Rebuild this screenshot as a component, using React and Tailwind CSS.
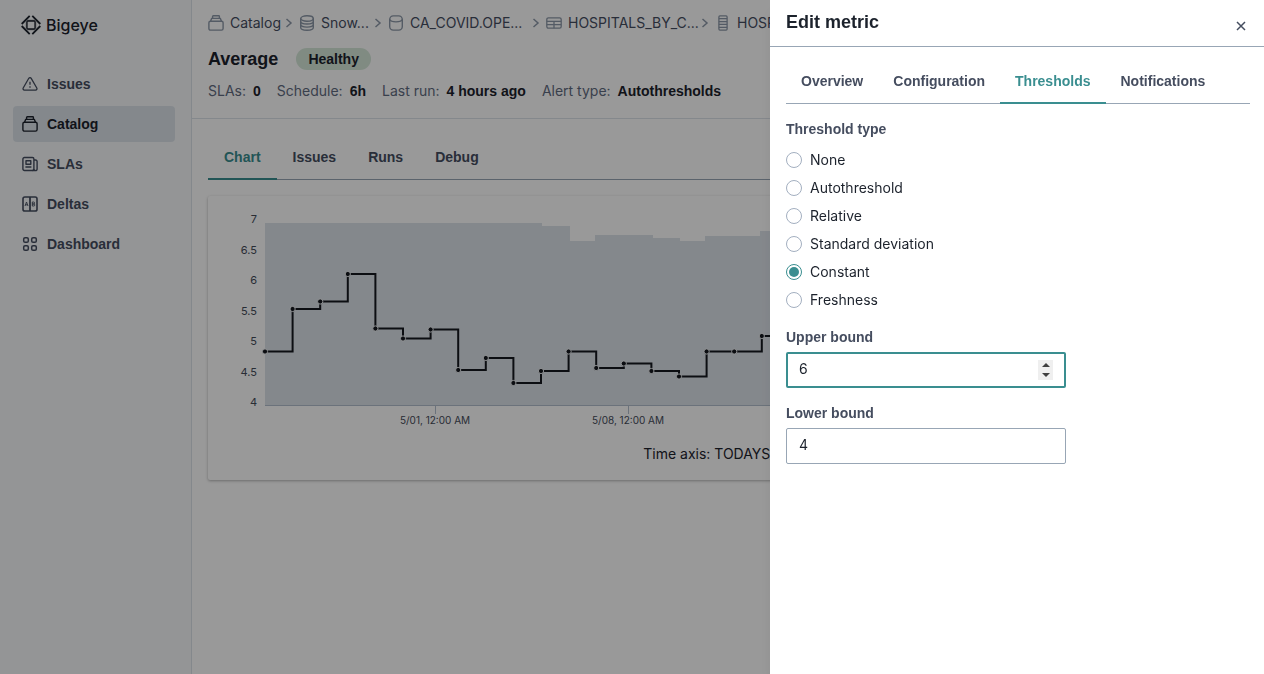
import React, { useRef, useState } from "react";

const CatalogIcon = ({ className }) => (
  <svg className={className} viewBox="0 0 16 16" fill="none" stroke="currentColor" strokeWidth="1.4" strokeLinejoin="round">
    <rect x="0.9" y="6.2" width="14.2" height="8.9" rx="1.6" />
    <path d="M2.6 6.2 3.6 3.4h8.8l1 2.8" />
    <path d="M4.6 3.4V1.5a.7.7 0 0 1 .7-.7h5.4a.7.7 0 0 1 .7.7v1.9" />
  </svg>
);

const DatabaseIcon = ({ className }) => (
  <svg className={className} viewBox="0 0 16 16" fill="none" stroke="currentColor" strokeWidth="1.4">
    <ellipse cx="8" cy="3.5" rx="6.3" ry="2.7" />
    <path d="M1.7 3.3v9.2c0 1.5 2.8 2.7 6.3 2.7s6.3-1.2 6.3-2.7V3.3" />
    <path d="M1.7 6.5C1.7 7.9 4.5 9 8 9s6.3-1.1 6.3-2.5M1.7 9.6c0 1.4 2.8 2.5 6.3 2.5s6.3-1.1 6.3-2.5" />
  </svg>
);

const SchemaIcon = ({ className }) => (
  <svg className={className} viewBox="0 0 16 16" fill="none" stroke="currentColor" strokeWidth="1.4">
    <rect x="1.7" y="0.9" width="12.6" height="14.2" rx="3.6" />
    <path d="M1.7 4.6C2.2 6 4.8 6.9 8 6.9s5.8-.9 6.3-2.3" />
  </svg>
);

const TableIcon = ({ className }) => (
  <svg className={className} viewBox="0 0 16 16" fill="none" stroke="currentColor" strokeWidth="1.3">
    <rect x="0.8" y="2.8" width="14.4" height="10.4" rx="1.6" />
    <path d="M.8 6.3h14.4M.8 9.7h14.4M8 6.3v6.9" />
  </svg>
);

const ColumnIcon = ({ className }) => (
  <svg className={className} viewBox="0 0 10 16" fill="none" stroke="currentColor" strokeWidth="1.3">
    <rect x="0.9" y="0.9" width="8.2" height="14.2" rx="1" />
    <path d="M.9 3.7h8.2M.9 6.6h8.2M.9 9.4h8.2M.9 12.3h8.2" />
  </svg>
);

const ChevronIcon = ({ className }) => (
  <svg className={className} viewBox="0 0 8 10" fill="none" stroke="currentColor" strokeWidth="1.5">
    <path d="M1.5 1 6 5 1.5 9" />
  </svg>
);

const IssuesIcon = ({ className }) => (
  <svg className={className} viewBox="0 0 16 16" fill="none" stroke="currentColor" strokeWidth="1.3" strokeLinejoin="round">
    <path d="M6.8 2.3a1.4 1.4 0 0 1 2.4 0l5.6 9.7a1.4 1.4 0 0 1-1.2 2.1H2.4A1.4 1.4 0 0 1 1.2 12z" />
    <path d="M8 5.8v3M8 10.3v1.5" />
  </svg>
);

const SlaIcon = ({ className }) => (
  <svg className={className} viewBox="0 0 16 16" fill="none" stroke="currentColor" strokeWidth="1.4" strokeLinejoin="round">
    <rect x="0.9" y="1.5" width="11" height="13" rx="1.5" />
    <path d="M11.9 4h1.7a1.5 1.5 0 0 1 1.5 1.5v7.5a1.5 1.5 0 0 1-3.2 0M10.4 14.5h3.2" />
    <path d="M4 4.7h4.8v3.5H4zM3.4 11h6" />
  </svg>
);

const DeltasIcon = ({ className }) => (
  <svg className={className} viewBox="0 0 16 16" fill="none" stroke="currentColor">
    <rect x="1" y="1" width="14" height="14" rx="1.8" strokeWidth="1.6" />
    <path d="M8 1v14" strokeWidth="1.8" />
    <path d="M3 10l1.5-4L6 10M3.5 8.8h2" strokeWidth="0.9" />
    <path d="M10.3 6h1.3a1 1 0 0 1 0 2h-1.3zM10.3 8h1.5a1 1 0 0 1 0 2h-1.5z" strokeWidth="0.9" />
  </svg>
);

const DashboardIcon = ({ className }) => (
  <svg className={className} viewBox="0 0 16 16" fill="none" stroke="currentColor" strokeWidth="1.5">
    <rect x="1.7" y="1.7" width="4.6" height="4.6" rx="1.4" />
    <rect x="9.7" y="1.7" width="4.6" height="4.6" rx="1.4" />
    <rect x="1.7" y="9.7" width="4.6" height="4.6" rx="1.4" />
    <rect x="9.7" y="9.7" width="4.6" height="4.6" rx="1.4" />
  </svg>
);

const LogoMark = ({ className }) => (
  <svg className={className} viewBox="0 0 20 20" fill="none" stroke="currentColor">
    <path d="M.7 9 8.7.9M11.3.9l8 8.1M.7 11l8 8.1M19.3 11l-8 8.1" strokeWidth="1.8" />
    <rect x="6" y="6" width="8" height="8" rx="0.8" strokeWidth="1.3" />
    <path d="M5.3 6.5v7M14.7 6.5v7M6.5 5.3h7M6.5 14.7h7" strokeWidth="0.6" />
  </svg>
);

const navItems = [
  { label: "Issues", Icon: IssuesIcon },
  { label: "Catalog", Icon: CatalogIcon, active: true },
  { label: "SLAs", Icon: SlaIcon },
  { label: "Deltas", Icon: DeltasIcon },
  { label: "Dashboard", Icon: DashboardIcon },
];

const crumbs = [
  { label: "Catalog", Icon: CatalogIcon, slot: "w-[55px]" },
  { label: "Snow...", Icon: DatabaseIcon, slot: "w-[53px]" },
  { label: "CA_COVID.OPE...", Icon: SchemaIcon, slot: "w-[122px]" },
  { label: "HOSPITALS_BY_C...", Icon: TableIcon, slot: "w-[133px]" },
  { label: "HOSP", Icon: ColumnIcon, slot: "" },
];

const facts = [
  ["SLAs:", "0"],
  ["Schedule:", "6h"],
  ["Last run:", "4 hours ago"],
  ["Alert type:", "Autothresholds"],
];

const DAY = 27.6;
const X0 = 57;
const BASE = 209.5;
const values = [155.5, 113, 105.5, 78, 132.5, 142.5, 133.5, 174, 162, 187, 175, 155.5, 172, 167.5, 175, 180.5, 155.5, 155.5, 140, 148, 160];
const band = [
  [57, 27], [334, 30], [362, 45], [387, 39], [445, 42], [472, 45], [497, 40], [552, 35], [640, 35],
];

function stepPath(points) {
  return points.reduce((d, [x, y], i) => (i === 0 ? `M${x} ${y}` : `${d}H${x}V${y}`), "");
}

function MetricChart() {
  const points = values.map((y, i) => [X0 + i * DAY, y]);
  return (
    <svg className="block h-60 w-[640px]" viewBox="0 0 640 240" role="img" aria-label="Metric history">
      <path d={`${stepPath(band)}V${BASE}H57Z`} fill="#dde3ea" />
      <path d={`M57 ${BASE}H640M227.5 210v8M420.5 210v8`} stroke="#b3bfcd" fill="none" />
      <g fontSize="11" fill="#454b59" textAnchor="end">
        {["7", "6.5", "6", "5.5", "5", "4.5", "4"].map((t, i) => (
          <text key={t} x="49" y={27 + i * 30.5}>{t}</text>
        ))}
      </g>
      <g fontSize="10" fill="#454b59" textAnchor="middle">
        <text x="227" y="228">5/01, 12:00 AM</text>
        <text x="420" y="228">5/08, 12:00 AM</text>
      </g>
      <path d={stepPath(points)} stroke="#14181f" strokeWidth="2" fill="none" />
      {points.map(([x, y]) => (
        <circle key={x} cx={x} cy={y} r="2.6" fill="#14181f" stroke="#eef1f4" strokeWidth="1" />
      ))}
    </svg>
  );
}

function Tabs({ items, active, onSelect, tabPadding = "px-4" }) {
  return (
    <div role="tablist" className="flex border-b border-[#98a6b5]">
      {items.map((t) => (
        <button
          key={t}
          type="button"
          role="tab"
          aria-selected={t === active}
          onClick={() => onSelect(t)}
          className={`-mb-px h-[45px] border-b-2 font-['Liberation_Sans',sans-serif] font-bold ${tabPadding} ${
            t === active ? "border-[#3a8e90] text-[#3a8e90]" : "border-transparent text-[#454d5f]"
          }`}
        >
          {t}
        </button>
      ))}
    </div>
  );
}

const thresholdTypes = ["None", "Autothreshold", "Relative", "Standard deviation", "Constant", "Freshness"];

function EditMetric() {
  const [tab, setTab] = useState("Thresholds");
  const [type, setType] = useState("Constant");
  const upper = useRef(null);
  return (
    <div role="dialog" aria-label="Edit metric" className="flex w-[494px] max-w-full flex-col bg-white shadow-lg">
      <header className="flex h-[47px] items-start justify-between border-b border-[#98a6b5] pl-4 pr-[13px]">
        <h2 className="mt-2 font-['Liberation_Sans',sans-serif] text-[18px] font-bold leading-7 text-[#1c222c]">Edit metric</h2>
        <button type="button" aria-label="Close" className="mt-4 flex size-5 items-center justify-center text-[#454d5f]">
          <svg className="size-[10px]" viewBox="0 0 10 10" fill="none" stroke="currentColor" strokeWidth="1.5">
            <path d="M1 1l8 8M9 1 1 9" />
          </svg>
        </button>
      </header>
      <div className="pl-4 pr-[14px] pt-3">
        <Tabs
          items={["Overview", "Configuration", "Thresholds", "Notifications"]}
          active={tab}
          onSelect={setTab}
          tabPadding="px-[15px]"
        />
        <fieldset className="mt-[15px]">
          <legend className="mb-[7px] font-['Liberation_Sans',sans-serif] font-bold text-[#454d5f]">Threshold type</legend>
          {thresholdTypes.map((t) => (
            <label key={t} className="flex h-7 items-center gap-2 text-[#1c222c]">
              <input
                type="radio"
                name="threshold"
                checked={t === type}
                onChange={() => setType(t)}
                className="size-4 appearance-none rounded-full border border-[#a3afc0] bg-clip-content p-[2px] checked:border-[#3a8e90] checked:bg-[#3a8e90]"
              />
              {t}
            </label>
          ))}
        </fieldset>
        <div className="mt-[13px] flex w-[280px] flex-col gap-[5px]">
          <label htmlFor="upper" className="font-['Liberation_Sans',sans-serif] font-bold text-[#454d5f]">Upper bound</label>
          <div className="relative">
            <input
              ref={upper}
              id="upper"
              type="number"
              defaultValue="6"
              className="h-9 w-full rounded-[2px] border-2 border-[#3a8e90] px-[11px] pb-1 text-[#1c222c] outline-none [appearance:textfield]"
            />
            <div className="absolute right-[13px] top-2 flex h-5 w-[15px] flex-col bg-[#efefef] text-[#404040]">
              <button type="button" aria-label="Increase" onClick={() => upper.current.stepUp()} className="flex flex-1 items-center justify-center">
                <svg className="h-1 w-2" viewBox="0 0 8 4" fill="currentColor"><path d="M0 4 4 0l4 4z" /></svg>
              </button>
              <button type="button" aria-label="Decrease" onClick={() => upper.current.stepDown()} className="flex flex-1 items-center justify-center">
                <svg className="h-1 w-2" viewBox="0 0 8 4" fill="currentColor"><path d="M0 0l4 4 4-4z" /></svg>
              </button>
            </div>
          </div>
        </div>
        <div className="mt-[15px] flex w-[280px] flex-col gap-[5px]">
          <label htmlFor="lower" className="font-['Liberation_Sans',sans-serif] font-bold text-[#454d5f]">Lower bound</label>
          <input
            id="lower"
            type="number"
            defaultValue="4"
            className="h-9 rounded-[2px] border border-[#98a6b5] px-3 pb-1 text-[#1c222c] outline-none [appearance:textfield]"
          />
        </div>
      </div>
    </div>
  );
}

export default function App() {
  const [tab, setTab] = useState("Chart");
  return (
    <div className="flex min-h-screen overflow-hidden bg-white font-['Inter',sans-serif] text-[14px] leading-5">
      <aside className="w-48 shrink-0 border-r border-[#dde3ea] bg-[#f7f9fb]">
        <div className="flex h-[50px] items-center gap-[5px] pl-[21px] text-[#1c222c]">
          <LogoMark className="size-5" />
          <span className="text-[16px] font-medium">Bigeye</span>
        </div>
        <nav className="mt-4 flex flex-col gap-1 pl-[13px] pr-4">
          {navItems.map(({ label, Icon, active }) => (
            <a
              key={label}
              href="#"
              className={`flex h-9 items-center gap-[9px] rounded px-[9px] font-['Liberation_Sans',sans-serif] font-bold ${
                active ? "bg-[#dde3ea] text-[#1c222c]" : "text-[#454d5f]"
              }`}
            >
              <Icon className="size-4" />
              {label}
            </a>
          ))}
        </nav>
      </aside>

      <main className="min-w-0 flex-1">
        <header className="border-b border-[#dde3ea] px-4 pb-[17px] pt-[13px]">
          <nav aria-label="Breadcrumb" className="flex h-5 items-center whitespace-nowrap text-[#454d5f]">
            {crumbs.map(({ label, Icon, slot }, i) => (
              <React.Fragment key={label}>
                {i > 0 && <ChevronIcon className="mr-[6px] h-[10px] w-2 shrink-0 text-[#8c98a8]" />}
                <a href="#" className="flex shrink-0 items-center gap-[6px]">
                  <Icon className="size-4 text-[#8c98a8]" />
                  <span className={slot}>{label}</span>
                </a>
              </React.Fragment>
            ))}
          </nav>
          <div className="mt-[15px] flex items-center gap-[18px]">
            <h1 className="font-['Liberation_Sans',sans-serif] text-[18px] font-bold leading-[22px] text-[#1c222c]">Average</h1>
            <span className="rounded-full bg-[#d5e8d9] px-3 font-['Liberation_Sans',sans-serif] font-bold leading-[22px] text-[#1c222c]">Healthy</span>
          </div>
          <dl className="mt-[11px] flex gap-4 whitespace-nowrap">
            {facts.map(([name, value]) => (
              <div key={name} className="flex gap-[7px]">
                <dt className="text-[#5f6b80]">{name}</dt>
                <dd className="font-['Liberation_Sans',sans-serif] font-bold text-[#1c222c]">{value}</dd>
              </div>
            ))}
          </dl>
        </header>
        <section className="px-4 pt-4">
          <Tabs items={["Chart", "Issues", "Runs", "Debug"]} active={tab} onSelect={setTab} />
          <div className="mt-4 rounded-[2px] pb-4 shadow-[0_1px_3px_rgba(0,0,0,0.3)]">
            <MetricChart />
            <p className="mt-2 text-center text-[#1c222c]">Time axis: TODAYS_DATE</p>
          </div>
        </section>
      </main>

      <div className="fixed inset-0 flex justify-end bg-black/40">
        <EditMetric />
      </div>
    </div>
  );
}
